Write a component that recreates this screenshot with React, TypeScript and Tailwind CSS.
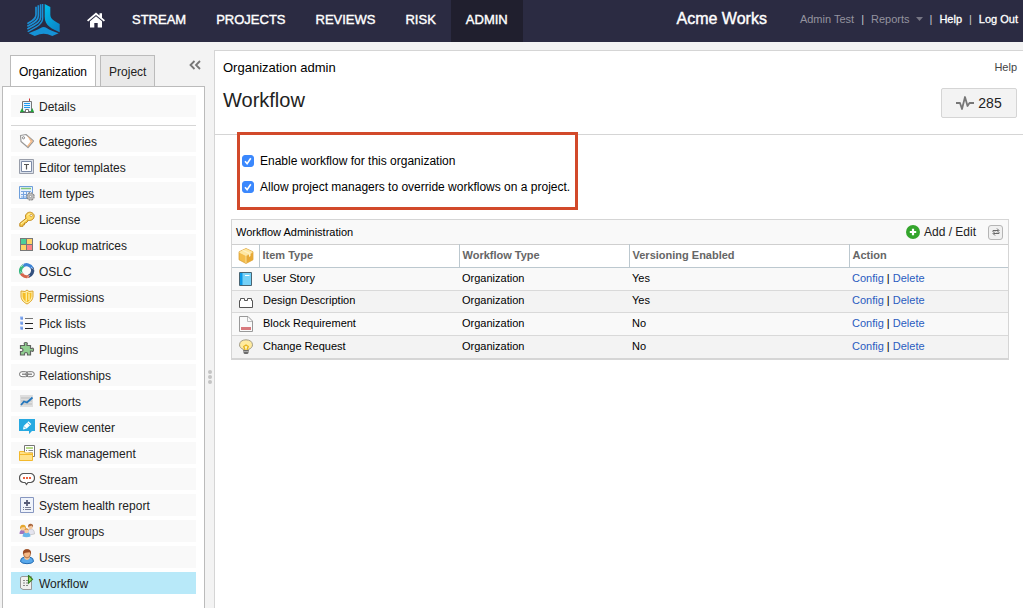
import type { ReactNode } from "react";

type IconProps = { children: ReactNode };

const Icon = ({ children }: IconProps) => (
  <svg viewBox="0 0 16 16" className="size-4 shrink-0" fill="none" aria-hidden="true">
    {children}
  </svg>
);

const Logo = () => (
  <svg viewBox="84 12 97 96" className="h-8 w-[33px]" fill="none" aria-hidden="true">
    <defs>
      <linearGradient id="logo-right" x1="0" y1="0" x2="0.6" y2="1">
        <stop offset="0" stopColor="#00c0ee" />
        <stop offset="1" stopColor="#0a87c9" />
      </linearGradient>
    </defs>
    <g stroke="#1b8fd4" strokeWidth="5">
      <path d="M110 20V44C110 57 97 63 84 71" />
      <path d="M117 16V48C117 63 100 69 84 79" />
      <path d="M124 13V52C124 68 104 75 84 87" />
      <path d="M130 12V55C130 74 108 82 85 95" strokeWidth="4" />
    </g>
    <path d="M136 12L153 21V44C153 58 167 63 181 72V97C160 86 136 79 136 50Z" fill="url(#logo-right)" />
    <path d="M88 100C103 93 115 90 124 84Q133 78 142 84C151 90 163 94 178 100L159 108L145 103Q133 99 121 103L106 108Z" fill="#1592d6" />
  </svg>
);

const sections = [
  {
    label: "Categories",
    icon: (
      <>
        <path d="M1.5 2.5L7 1.5L14.5 8L9 14.5L2 8.5Z" fill="#fff" stroke="#999" strokeWidth="1.2" strokeLinejoin="round" />
        <path d="M8 2.5L14 8L9 14L8 13L11.5 8.5Z" fill="#f5bd8c" />
        <circle cx="4.5" cy="4.8" r="1.1" fill="#fff" stroke="#888" />
      </>
    ),
  },
  {
    label: "Editor templates",
    icon: (
      <>
        <path d="M.5 .5H14.5V14.5H.5Z" fill="#dce2ec" stroke="#999eaa" />
        <path d="M2.5 2.5H12.5V12.5H2.5Z" fill="#fff" stroke="#7d8ba7" />
        <path d="M5 5.5H10M7.5 5.5V10.5" stroke="#555" strokeWidth="1.2" />
      </>
    ),
  },
  {
    label: "Item types",
    icon: (
      <>
        <path d="M.5 1.5H13.5V13.5H.5Z" fill="#e9f2fd" stroke="#6e9fdb" />
        <path d="M2 3.5H12" stroke="#84c978" strokeWidth="1.5" />
        <path d="M2 6.5H12M2 9.5H9M2 12H8M4.5 6V13M7.5 6V13M10.5 6V8" stroke="#79a5df" />
        <circle cx="11.5" cy="11.5" r="3.6" fill="#d2d2d2" stroke="#888" strokeWidth="1.3" strokeDasharray="1.9 .9" />
        <circle cx="11.5" cy="11.5" r="2.8" fill="#ccc" stroke="#999" strokeWidth=".6" />
        <circle cx="11.5" cy="11.5" r="1.2" fill="#fff" stroke="#777" strokeWidth=".7" />
      </>
    ),
  },
  {
    label: "License",
    icon: (
      <>
        <path d="M7 7.3L.8 12.3V15.3H4V13.8H5.5V12H7L9.5 9.4" fill="#f8cf4f" stroke="#c18a20" strokeLinejoin="round" />
        <path d="M6.5 5C7 2 10 .5 12.5 1.5C15.5 2.8 16 5.5 14 8C12 10 8.5 10 7 8Z" fill="#ffdb63" stroke="#c18a20" />
        <path d="M2 13L8 8M8.5 4.5Q9.5 2.8 11.5 3" stroke="#fff1ac" />
        <circle cx="12.2" cy="4.5" r="1.2" fill="#fff" stroke="#b98524" strokeWidth=".7" />
      </>
    ),
  },
  {
    label: "Lookup matrices",
    icon: (
      <>
        <path d="M1 1H14V14H1Z" fill="#787878" />
        <path d="M2 2H7V7H2Z" fill="#4dcf99" />
        <path d="M8 2H13V7H8ZM2 8H7V13H2Z" fill="#ffd466" />
        <path d="M8 8H13V13H8Z" fill="#ff8383" />
      </>
    ),
  },
  {
    label: "OSLC",
    icon: (
      <g strokeWidth="3.2">
        <path d="M4 3A6 6 0 0 1 13.2 5.4" stroke="#3d83d6" />
        <path d="M13.2 5.2A6 6 0 0 1 9.5 13.2" stroke="#34517f" />
        <path d="M10 13.1A6 6 0 0 1 2.2 10.3" stroke="#d5654c" />
        <path d="M2.2 10.5A6 6 0 0 1 4.3 2.8" stroke="#37b880" />
        <path d="M5 1L2 4M14.5 6.5L12 4M8 14.5L11 12M1 8.5L4 10.5" stroke="#f9f9f9" strokeWidth=".5" />
      </g>
    ),
  },
  {
    label: "Permissions",
    icon: (
      <>
        <path d="M8 1L10 2.5L14 2V7C14 11 11 13.5 8 15C5 13.5 2 11 2 7V2L6 2.5Z" fill="#fff2b0" stroke="#dea52c" />
        <path d="M8 3L10 4L12.5 3.6V7C12.5 10 10.5 12 8 13.3C5.5 12 3.5 10 3.5 7V3.6L6 4Z" fill="#f5bd27" />
        <path d="M7.3 3.3V12.5M10 4.5V11" stroke="#fff1a6" strokeWidth="1.3" />
      </>
    ),
  },
  {
    label: "Pick lists",
    icon: (
      <>
        <path d="M1 1.5H4V4.5H1ZM1 6.5H4V9.5H1ZM1 11.5H4V14.5H1Z" fill="#94b6f3" />
        <path d="M2 2.5H4V4.5H2ZM2 7.5H4V9.5H2ZM2 12.5H4V14.5H2Z" fill="#6d96e5" />
        <path d="M6 3.5H14" stroke="#777" />
        <path d="M6 8.5H14M6 13.5H14" stroke="#222" />
      </>
    ),
  },
  {
    label: "Plugins",
    icon: (
      <path
        d="M1.5 4.5H5.5V3.5Q4.5 1.5 6.7 1.5Q9 1.5 8 3.5V4.5H11.5V7.5H12.5Q14.5 6.5 14.5 8.7Q14.5 11 12.5 10H11.5V14H8.5V13Q8.5 11.5 7 11.5Q5.5 11.5 5.5 13V14H1.5V10.5H2.5Q4 10.5 4 9Q4 7.5 2.5 7.5H1.5Z"
        fill="#91cf91"
        stroke="#606460"
        strokeWidth="1.2"
      />
    ),
  },
  {
    label: "Relationships",
    icon: (
      <g stroke="#777">
        <rect x=".5" y="4.7" width="8.5" height="5" rx="2.5" fill="#fff" />
        <rect x="6.8" y="4.7" width="8.5" height="5" rx="2.5" />
        <path d="M3 7.2H13" strokeWidth="1.2" />
      </g>
    ),
  },
  {
    label: "Reports",
    icon: (
      <>
        <path d="M1 2H14V14H1Z" fill="#dedede" />
        <path d="M2 5H11M2 8H13M2 11H13" stroke="#bdbdbd" />
        <path d="M2 12L5 8.5L8 9.5L13.5 4.5" stroke="#2376bd" strokeWidth="1.8" />
      </>
    ),
  },
  {
    label: "Review center",
    icon: (
      <>
        <path d="M0 0H16V12H13L10 15V12H0Z" fill="#27a9e1" />
        <path d="M4 10.5L4.7 7L9.5 2.2L12.3 5L7.5 9.8Z" fill="#fff" />
        <path d="M8.4 3.5L11 6.2M4.8 7.3L7.2 9.7" stroke="#27a9e1" strokeWidth=".8" />
      </>
    ),
  },
  {
    label: "Risk management",
    icon: (
      <>
        <path d="M5.5 .5H15.5V11.5H5.5Z" fill="#fff" stroke="#777" />
        <path d="M7 3H14" stroke="#88c13b" strokeWidth="1.2" />
        <path d="M7 5.5H8M9.5 5.5H14M9.5 8H14M11 10H14" stroke="#888" />
        <path d="M.5 6.5H5L6.5 8H13.5V15.5H.5Z" fill="#ffe28b" stroke="#f3b92c" />
        <path d="M.5 9.5H13.5" stroke="#f3b92c" />
      </>
    ),
  },
  {
    label: "Stream",
    icon: (
      <>
        <path d="M4 2.5H12Q15.5 3.5 15.5 7Q15.5 10.5 12 11.5H9L7.5 13.5L6 11.5H4Q.5 10.5 .5 7Q.5 3.5 4 2.5Z" fill="#fff" stroke="#555" strokeWidth="1.2" />
        <path d="M4 6H6V8H4ZM7 6H9V8H7ZM10 6H12V8H10Z" fill="#ed603e" />
      </>
    ),
  },
  {
    label: "System health report",
    icon: (
      <>
        <path d="M1.5 .5H14.5V15.5H1.5Z" fill="#f0f4fb" stroke="#8797c0" />
        <path d="M5 6H11M8 3V9" stroke="#555b76" strokeWidth="1.8" />
        <path d="M4 10.5H5M6 10.5H12M4 12.5H5M6 12.5H12" stroke="#777d94" />
      </>
    ),
  },
  {
    label: "User groups",
    icon: (
      <>
        <path d="M9 9Q9 6 12 6Q15.5 6 15.5 11L10 12Z" fill="#e4e4ef" stroke="#aaa" strokeWidth=".5" />
        <circle cx="11.5" cy="3.8" r="2.4" fill="#f3c49c" />
        <path d="M9 4Q9 .5 12 .8Q14.5 1.4 14 4L12.5 2.5Z" fill="#a8663d" />
        <path d="M.5 11Q.5 6.5 4 6.5Q7 7 7 11Z" fill="#a176bf" />
        <circle cx="4" cy="5" r="2.6" fill="#f9cf9c" />
        <path d="M1 6.5Q.5 2 4 1.8Q7.5 2 7 6.5L5.5 4L2.5 4.5Z" fill="#e5a72d" />
        <path d="M3.5 13.5Q4 9 7.5 9Q11 9 11.5 13.5Q7.5 15 3.5 13.5Z" fill="#69b7ea" />
        <circle cx="7.5" cy="8" r="2.2" fill="#f9cda2" />
        <path d="M5.3 7Q6 5 7.8 5.2Q9.8 5.4 9.7 7.5L8 6.5Z" fill="#d8882d" />
      </>
    ),
  },
  {
    label: "Users",
    icon: (
      <>
        <path d="M1.5 12.5Q1.5 8.5 5 8.3H11Q14.5 8.5 14.5 12.5Q13 14.7 8 14.7Q3 14.7 1.5 12.5Z" fill="#58a8eb" stroke="#246bb1" />
        <path d="M5 9Q8 13 11 9L10 7H6Z" fill="#f6c494" />
        <path d="M4.3 4Q4.3 .6 8 .6Q11.7 .6 11.7 4Q11.7 8.5 8 9Q4.3 8.5 4.3 4Z" fill="#f5b884" stroke="#91522a" strokeWidth=".7" />
        <path d="M4 5Q3.5 .3 8 .3Q12.5 .3 12 5L10.5 3.2L6.5 3.7Z" fill="#9b4b23" />
      </>
    ),
  },
  {
    label: "Workflow",
    active: true,
    icon: (
      <>
        <path d="M1.5 2.5L3 1.5H12.5V14.5H4L1.5 13Z" fill="#f0f0ee" stroke="#999" />
        <path d="M4 5.5H10M4 8H10M4 10.5H10" stroke="#888" strokeDasharray="2 1" />
        <path d="M9.5 .5L13.5 4.3L9.5 8.2Z" fill="#a5df55" stroke="#347d22" strokeWidth="1.1" />
      </>
    ),
  },
];

const detailsIcon = (
  <>
    <path d="M3.5 3.5H12.5V13.5H3.5Z" fill="#e8f4fd" stroke="#777" />
    <path d="M5 5.5H11M5 7.5H11M5 9.5H11" stroke="#1f9af0" strokeWidth="1.2" />
    <path d="M10.5 .5V3" stroke="#c33" />
    <path d="M6.5 14V11.5H9.5V14" fill="#fff" stroke="#777" />
    <path d="M1 14L3 10L5 14ZM11.5 14L13.3 10L15 14Z" fill="#21a53a" />
    <path d="M1 14.5H15" stroke="#666" />
  </>
);

const itemTypes = [
  {
    name: "User Story",
    versioning: "Yes",
    icon: (
      <>
        <path d="M1.5 1.5H13.5V14.5H1.5Z" fill="#76d1f7" stroke="#4b6471" />
        <path d="M2 2H4.5V14H2Z" fill="#0c99e8" />
        <path d="M7 4.5H11.5" stroke="#fff" />
      </>
    ),
  },
  {
    name: "Design Description",
    versioning: "Yes",
    icon: <path d="M1.5 13.5V6.5H2.5V4.5H6.5V6.5H9.5V4.5H13.5V6.5H14.5V13.5Z" fill="#fff" stroke="#555" strokeLinejoin="round" />,
  },
  {
    name: "Block Requirement",
    versioning: "No",
    icon: (
      <>
        <path d="M1.5 .5H10L14.5 5V15.5H1.5Z" fill="#fafafa" stroke="#999" />
        <path d="M9.5 1V5.5H14" stroke="#bbb" />
        <path d="M3 11H13V14H3Z" fill="#d8797d" />
      </>
    ),
  },
  {
    name: "Change Request",
    versioning: "No",
    icon: (
      <>
        <path d="M5.5 12V10.5C3 9.5 1.5 8 1.5 5.8Q1.8 1 8 .8Q14.2 1 14.5 5.8C14.5 8 13 9.5 10.5 10.5V12Z" fill="#ffeb9f" stroke="#a29b86" />
        <path d="M7 11L5.8 7.5L8 6L10.2 7.5L9 11" fill="#fff3ba" stroke="#e7b51f" strokeWidth="1.4" />
        <path d="M5.5 11H10.5V14L9.5 15H6.5L5.5 14Z" fill="#6c6c6c" />
        <path d="M6 12.5H10" stroke="#aaa" />
      </>
    ),
  },
];

const navLinks = ["STREAM", "PROJECTS", "REVIEWS", "RISK", "ADMIN"];

function TopBar() {
  return (
    <header className="flex h-[42px] items-center bg-[#2b2b42] pr-[5px] text-white">
      <a href="#" aria-label="Jama" className="ml-[27px] -mt-0.5">
        <Logo />
      </a>
      <a href="#" aria-label="Home" className="-mt-0.5 mr-3 ml-[27px]">
        <svg viewBox="0 0 18 16" className="h-4 w-[18px]" fill="#fff" aria-hidden="true">
          <path d="M9 .5L0 8.3L1.2 9.6L9 2.9L16.8 9.6L18 8.3L15 5.7V1.3H12.5V3.5Z" />
          <path d="M9 4.2L3 9.3V15.5H7.3V11H10.7V15.5H15V9.3Z" />
        </svg>
      </a>
      <nav className="flex h-full">
        {navLinks.map((link) => (
          <a
            key={link}
            href="#"
            className={`flex items-center px-[15px] pb-0.5 text-[13px] [-webkit-text-stroke:0.4px_white] ${
              link === "ADMIN" ? "bg-[#201f2e]" : ""
            }`}
          >
            {link}
          </a>
        ))}
      </nav>
      <div className="ml-auto flex items-center gap-[7px] pb-1 text-[11px] whitespace-nowrap">
        <span className="mr-[26px] text-base [-webkit-text-stroke:0.4px_white]">Acme Works</span>
        <a href="#" className="text-[#94939f]">Admin Test</a>
        <span className="text-[#c5c5cc]">|</span>
        <a href="#" className="flex items-center gap-1.5 text-[#94939f]">
          Reports
          <svg viewBox="0 0 7 4" className="h-1 w-[7px]" fill="#777684" aria-hidden="true">
            <path d="M0 0H7L3.5 4Z" />
          </svg>
        </a>
        <span className="text-[#c5c5cc]">|</span>
        <a href="#" className="[-webkit-text-stroke:0.3px_white]">Help</a>
        <span className="text-[#c5c5cc]">|</span>
        <a href="#" className="[-webkit-text-stroke:0.3px_white]">Log Out</a>
      </div>
    </header>
  );
}

type SideItemProps = { label: string; icon: ReactNode; active?: boolean };

function SideItem({ label, icon, active }: SideItemProps) {
  return (
    <li>
      <a href="#" className={`flex h-[22px] items-center gap-1 px-2 ${active ? "bg-[#b8e9f9]" : "bg-[#f9f9f9]"}`}>
        <Icon>{icon}</Icon>
        <span className="pt-0.5">{label}</span>
      </a>
    </li>
  );
}

function Sidebar() {
  return (
    <aside className="ml-0.5 flex w-[203px] shrink-0 flex-col pt-[13px] text-xs text-[#222]">
      <div className="flex items-end gap-1 pl-2">
        <button className="-mb-px h-8 border border-b-0 border-[#bbb] bg-white px-2 text-black">Organization</button>
        <button className="h-[31px] border border-b-0 border-[#bbb] bg-[#e9e9e9] px-2 pt-0.5">Project</button>
        <button aria-label="Collapse sidebar" className="mr-1 mb-4 ml-auto">
          <svg viewBox="0 0 12 10" className="h-2.5 w-3" fill="none" stroke="#777" strokeWidth="1.8" aria-hidden="true">
            <path d="M5.5 1L1.5 5L5.5 9M11 1L7 5L11 9" />
          </svg>
        </button>
      </div>
      <nav className="flex-1 border border-b-0 border-[#bbb] bg-white px-2 pt-2">
        <ul className="mb-1 border-b border-[#d6d6d6] pb-2">
          <SideItem label="Details" icon={detailsIcon} />
        </ul>
        <ul className="flex flex-col gap-1 pb-3.5">
          {sections.map((section) => (
            <SideItem key={section.label} {...section} />
          ))}
        </ul>
      </nav>
    </aside>
  );
}

function CheckOption({ id, label }: { id: string; label: string }) {
  return (
    <div className="flex items-center gap-1.5">
      <span className="grid size-3 place-items-center">
        <input
          id={id}
          type="checkbox"
          defaultChecked
          className="peer col-start-1 row-start-1 size-3 appearance-none rounded-[3px] border border-gray-400 checked:border-[#3b88fd] checked:bg-[#3b88fd]"
        />
        <svg
          viewBox="0 0 12 12"
          className="pointer-events-none col-start-1 row-start-1 size-3 opacity-0 peer-checked:opacity-100"
          fill="none"
          stroke="#fff"
          strokeWidth="1.6"
          aria-hidden="true"
        >
          <path d="M3 6.3L5.1 8.6L8.8 3.2" />
        </svg>
      </span>
      <label htmlFor={id}>{label}</label>
    </div>
  );
}

function WorkflowTable() {
  return (
    <section className="mr-3.5 ml-4 border border-b-2 border-[#d5d5d5] text-[11px]">
      <div className="flex h-6 items-center bg-[#f9f9f9] pr-[5px] pl-1">
        <h2>Workflow Administration</h2>
        <button className="ml-auto flex items-center gap-1 text-xs text-[#222]">
          <svg viewBox="0 0 14 14" className="size-3.5" aria-hidden="true">
            <circle cx="7" cy="7" r="7" fill="#34a52c" />
            <path d="M7 3.8V10.2M3.8 7H10.2" stroke="#fff" strokeWidth="2.2" />
          </svg>
          Add / Edit
        </button>
        <button
          aria-label="Refresh"
          className="ml-3 grid size-[15px] place-items-center rounded-[3px] border border-[#b5b5b5] bg-[#f0f0f0]"
        >
          <svg viewBox="0 0 10 10" className="size-2.5" fill="none" stroke="#666" aria-hidden="true">
            <path d="M2 5V3.5H7.5M6 1.5L8 3.5L6 5.5M8 5V6.5H2.5M4 4.5L2 6.5L4 8.5" />
          </svg>
        </button>
      </div>
      <table className="w-full table-fixed border-collapse text-left">
        <colgroup>
          <col className="w-[27px]" />
          <col className="w-[200px]" />
          <col className="w-[170px]" />
          <col className="w-[220px]" />
          <col />
        </colgroup>
        <thead>
          <tr className="h-[23px] border-y border-t-[#cfcfcf] border-b-[#bcc8cf] text-[#666]">
            <th className="pl-1.5" aria-label="Icon">
              <Icon>
                <path d="M8 .5L15 3.8V11.8L8 15.5L1 11.8V3.8Z" fill="#f4bd4b" stroke="#d99c2e" strokeWidth=".7" />
                <path d="M8 .8L15 3.9L8 7.5L1 3.9Z" fill="#ffe7a0" />
                <path d="M8 7.5L15 3.9V11.7L8 15.3Z" fill="#e7a937" />
                <path d="M4 2.6L11 6V9L12.5 8V5.2L5.5 1.9Z" fill="#fff1c6" />
                <path d="M1.5 4.3L8 7.6V15M8 7.6L14.5 4.3" stroke="#fff0bf" strokeWidth=".7" />
              </Icon>
            </th>
            <th className="border-l border-[#bcc8cf] px-[3px] pb-0.5">Item Type</th>
            <th className="border-l border-[#bcc8cf] px-[3px] pb-0.5">Workflow Type</th>
            <th className="border-l border-[#bcc8cf] px-[3px] pb-0.5">Versioning Enabled</th>
            <th className="border-l border-[#bcc8cf] px-[3px] pb-0.5">Action</th>
          </tr>
        </thead>
        <tbody>
          {itemTypes.map(({ name, versioning, icon }) => (
            <tr key={name} className="h-[23px] border-t border-[#d9d9d9] bg-[#f9f9f9] first:border-[#bcc8cf] even:h-[22px] even:bg-[#f3f3f3]">
              <td className="pl-1.5">
                <Icon>{icon}</Icon>
              </td>
              <td className="px-1 pb-0.5">{name}</td>
              <td className="px-[3px] pb-0.5">Organization</td>
              <td className="px-[3px] pb-0.5">{versioning}</td>
              <td className="px-[3px] pb-0.5">
                <a href="#" className="text-[#2a5cc0]">Config</a>
                {" | "}
                <a href="#" className="text-[#2a5cc0]">Delete</a>
              </td>
            </tr>
          ))}
        </tbody>
      </table>
    </section>
  );
}

export default function App() {
  return (
    <div className="flex min-h-screen flex-col bg-[#f3f3f3] font-['Liberation_Sans',Arial,sans-serif] text-black">
      <TopBar />
      <div className="flex flex-1">
        <Sidebar />
        <div className="flex w-[9px] shrink-0 flex-col items-center gap-px pt-[328px]">
          <span className="size-1 rounded-full bg-[#c4c4c4]" />
          <span className="size-1 rounded-full bg-[#c4c4c4]" />
          <span className="size-1 rounded-full bg-[#c4c4c4]" />
        </div>
        <main className="mt-2 min-w-0 flex-1 border-t border-l border-[#d5d5d5] bg-white">
          <div className="flex h-[84px] justify-between border-b border-[#d5d5d5] pt-2 pr-1.5 pl-2">
            <div className="pt-px">
              <p className="text-[13px] leading-4">Organization admin</p>
              <h1 className="mt-3 text-xl leading-6 text-[#222]">Workflow</h1>
            </div>
            <div className="flex flex-col items-end">
              <a href="#" className="text-[11px] leading-4 text-[#444]">Help</a>
              <button className="mt-[13px] flex h-[30px] w-19 items-center justify-center gap-1 rounded-xs border border-[#d5d5d5] bg-[#f3f3f3] text-sm text-[#222]">
                <svg viewBox="0 0 18 14" className="h-3.5 w-[18px]" fill="none" stroke="#777" strokeWidth="1.8" strokeLinejoin="round" aria-hidden="true">
                  <path d="M0 7H4L6 13L9 1L11.5 10L13.5 7H18" />
                </svg>
                285
              </button>
            </div>
          </div>
          {/* highlight frame overlaps the title divider */}
          <div className="relative -mt-[3px] mb-[9px] ml-[22px] flex h-[78px] w-fit flex-col justify-center gap-2 border-3 border-[#d2492a] pt-1.5 pr-[5px] pl-0.5 text-xs leading-[18px]">
            <CheckOption id="enable-workflow" label="Enable workflow for this organization" />
            <CheckOption id="allow-override" label="Allow project managers to override workflows on a project." />
          </div>
          <WorkflowTable />
        </main>
      </div>
    </div>
  );
}
